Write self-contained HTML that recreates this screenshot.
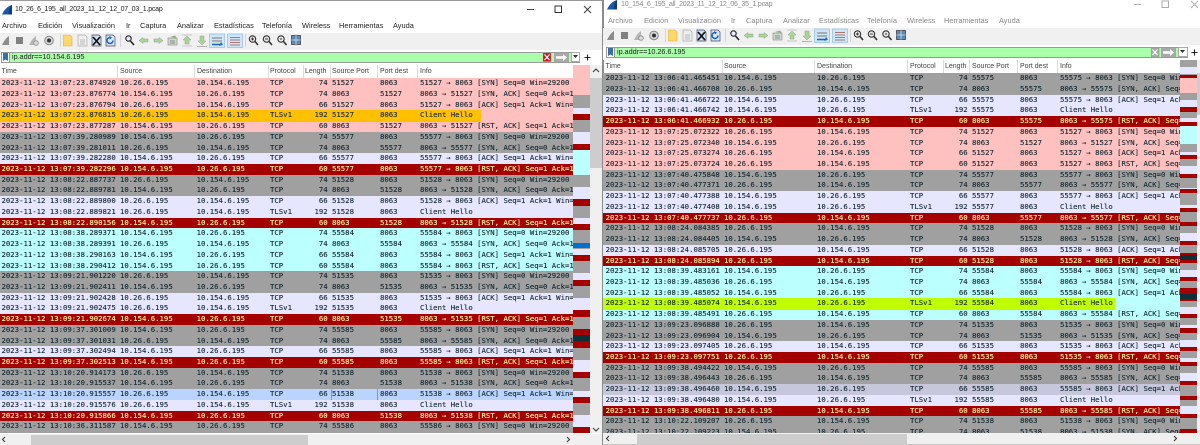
<!DOCTYPE html>
<html lang="es"><head><meta charset="utf-8"><title>Wireshark</title>
<style>
html,body{margin:0;padding:0;background:#fff;overflow:hidden}
#a{position:relative;width:1200px;height:445px;overflow:hidden;background:#fff;filter:blur(.3px);font-family:"Liberation Sans",sans-serif}
.x{position:absolute}
.tt{position:absolute;font-size:7px;letter-spacing:-.2px;color:#222;white-space:pre;line-height:10px}
.m{position:absolute;font-size:7.4px;color:#222;white-space:pre;line-height:10px}
.dim .m,.dim .tt{color:#8a8a8a}
.h{position:absolute;font-size:7px;color:#444;white-space:pre;line-height:10px}
.tb{position:absolute;overflow:hidden;font-family:"DejaVu Sans Mono","Liberation Mono",monospace;font-size:7.3px;color:#12272e;-webkit-text-stroke:.12px currentColor}
.tb p{display:block;margin:0;height:10.72px;position:relative;overflow:hidden}
.tb span{position:absolute;top:0;line-height:10.5px;white-space:pre}
.g{background:#a0a0a0}.l{background:#e7e6ff}.k{background:#ffc0c0}.c{background:#bbffff}
.r{background:#a40000;color:#fffc9c}.sel{background:#bad4ff}.dl{background:#c6c6dc}
.tb u{position:absolute;top:-.5px;height:11.7px;left:0;text-decoration:none}
.L{left:0;top:78.3px;width:573px;height:355px}
.L span:nth-of-type(1){left:1.5px}.L span:nth-of-type(2){left:120px}.L span:nth-of-type(3){left:196.6px}.L span:nth-of-type(4){left:270px}
.L span:nth-of-type(5){right:245.3px}.L span:nth-of-type(6){left:332px}.L span:nth-of-type(7){left:380px}.L span:nth-of-type(8){left:420px}
.R{left:603px;top:73.3px;width:577px;height:360px}
.R span:nth-of-type(1){left:2.6px}.R span:nth-of-type(2){left:121px}.R span:nth-of-type(3){left:214px}.R span:nth-of-type(4){left:307px}
.R span:nth-of-type(5){right:212.3px}.R span:nth-of-type(6){left:369px}.R span:nth-of-type(7){left:417px}.R span:nth-of-type(8){left:457px}
.f{outline:1px solid #7f9ab0;outline-offset:0;width:45px;height:10.5px;top:0}
.ov{position:absolute;width:17px}
.ov div{position:absolute;left:0;width:17px}
.dv{position:absolute;width:1px;background:#dcdcdc}
</style></head><body>
<div id="a">
<svg width="0" height="0" style="position:absolute"><defs>
<g id="fin"><path d="M0 9.5H10V0C6 1 2.5 4 0 9.5Z" fill="#1c56a8"/><path d="M6.5 9.5H10V0C8 1.500 7 5 6.500 9.500Z" fill="#0d3a80"/></g>
<g id="tools">
<path d="M2 45H9V36C6 38 4 41 2 45Z" fill="#8c8c8c"/>
<rect x="16" y="37" width="7" height="7" fill="#808080"/>
<path d="M29 45H36V36C33 38 31 41 29 45Z" fill="#b5b5b5"/><circle cx="36" cy="43" r="2.300" fill="#ddd" stroke="#999"/>
<circle cx="49" cy="40.500" r="4.300" fill="#d9d9d9" stroke="#888"/><circle cx="49" cy="40.500" r="2" fill="#333"/>
<rect x="60" y="34" width="1" height="13" fill="#d5d5d5"/>
<path d="M63.500 35H70L72 37V46H63.500Z" fill="#fdd868" stroke="#e0b040" stroke-width=".6"/>
<path d="M78 35H85L87 37V46H78Z" fill="#eee" stroke="#aaa" stroke-width=".7"/><path d="M80 40H85M80 42H85M80 44H85" stroke="#aaa" stroke-width=".8"/>
<path d="M92 35H99L101 37V46H92Z" fill="#cfe0f5" stroke="#446" stroke-width=".7"/><path d="M93 37L100 45M100 37L93 45" stroke="#111" stroke-width="1.700"/>
<path d="M106 35H113L115 37V46H106Z" fill="#d8e8f8" stroke="#446" stroke-width=".7"/><path d="M113 40.500A3 3 0 1 1 110.500 37.500" fill="none" stroke="#1a62c0" stroke-width="1.500"/><path d="M109 36L112 37.500L110 39.500Z" fill="#1a62c0"/>
<rect x="120" y="34" width="1" height="13" fill="#d5d5d5"/>
<circle cx="128.500" cy="38.500" r="2.700" fill="#eef" stroke="#222" stroke-width="1.100"/><path d="M130.500 41L134 45" stroke="#222" stroke-width="1.600"/>
<path d="M139 40.500L143 37.500V39H148V42H143V43.500Z" fill="#a8d890" stroke="#999" stroke-width=".5"/>
<path d="M163 40.500L159 37.500V39H154V42H159V43.500Z" fill="#a8d890" stroke="#999" stroke-width=".5"/>
<rect x="168" y="38" width="9" height="7" fill="#cfd8c8" stroke="#888" stroke-width=".6"/><path d="M170 37L175 35.500L177 38" fill="#8fb080"/><path d="M170 41H175M170 43H175" stroke="#678" stroke-width=".7"/>
<path d="M187 36L191 40H189V44H185V40H183Z" fill="#a8d890" stroke="#999" stroke-width=".5"/><path d="M182 35H192M182 46H192" stroke="#bbb" stroke-width=".8"/>
<path d="M202 45L206 41H204V36H200V41H198Z" fill="#a8d890" stroke="#999" stroke-width=".5"/><path d="M197 46.500H207" stroke="#aaa" stroke-width=".9"/>
<rect x="209.500" y="34" width="15" height="13.500" fill="#cfe5f6" stroke="#8fc0e4" stroke-width=".7"/><path d="M212 38H222M212 41H222" stroke="#777" stroke-width="1"/><path d="M212 44.500H222" stroke="#1f6ab0" stroke-width="1.600"/><path d="M221 42L223 44.500L219 46Z" fill="#1f6ab0"/>
<rect x="227.500" y="34" width="15" height="13.500" fill="#cfe5f6" stroke="#8fc0e4" stroke-width=".7"/><path d="M230 37.500H240M230 40H240M230 42.500H240M230 45H240" stroke="#a77" stroke-width="1"/>
<rect x="245" y="34" width="1" height="13" fill="#d5d5d5"/>
<circle cx="252.500" cy="39" r="3.200" fill="#e8e8e8" stroke="#333" stroke-width="1.100"/><path d="M255 41.500L258 45" stroke="#333" stroke-width="1.600"/><path d="M251 39H254M252.500 37.500V40.500" stroke="#333" stroke-width=".9"/>
<circle cx="266.500" cy="39" r="3.200" fill="#e8e8e8" stroke="#333" stroke-width="1.100"/><path d="M269 41.500L272 45" stroke="#333" stroke-width="1.600"/><path d="M265 39H268" stroke="#333" stroke-width=".9"/>
<circle cx="281" cy="39" r="3.200" fill="#e8e8e8" stroke="#333" stroke-width="1.100"/><path d="M283.500 41.500L286.500 45" stroke="#333" stroke-width="1.600"/><rect x="280.300" y="38.300" width="1.400" height="1.400" fill="#333"/>
<rect x="291.500" y="35.500" width="9" height="9" fill="#5a8ab8" stroke="#333" stroke-width=".7"/><path d="M296 35.500V44.500M291.500 40H300.500" stroke="#ddd" stroke-width=".8"/>
</g>
<g id="xb"><rect width="8" height="8.500" fill="currentColor" stroke="#888" stroke-width=".5"/><path d="M1.500 1.500L6.500 7M6.500 1.500L1.500 7" stroke="#fff" stroke-width="1.300"/></g>
</defs></svg>

<!-- LEFT WINDOW -->
<div class="x" style="left:0;top:0;width:602px;height:1px;background:#9a9a9a"></div>
<svg class="x" style="left:2px;top:4.500px" width="10" height="10"><use href="#fin"/></svg>
<div class="tt" style="left:15px;top:5px">10_26_6_195_all_2023_11_12_12_07_03_1.pcap</div>
<svg class="x" style="left:520px;top:3px" width="80" height="13"><path d="M7 6.500H14" stroke="#333" stroke-width=".9"/><rect x="35" y="3" width="6.500" height="6.500" fill="none" stroke="#333"/><path d="M64 3L71 10M71 3L64 10" stroke="#333" stroke-width=".9"/></svg>
<div class="m" style="left:2px;top:21px">Archivo</div><div class="m" style="left:38px;top:21px">Edición</div><div class="m" style="left:72px;top:21px">Visualización</div><div class="m" style="left:126px;top:21px">Ir</div><div class="m" style="left:140px;top:21px">Captura</div><div class="m" style="left:177px;top:21px">Analizar</div><div class="m" style="left:214px;top:21px">Estadísticas</div><div class="m" style="left:262px;top:21px">Telefonía</div><div class="m" style="left:302px;top:21px">Wireless</div><div class="m" style="left:339px;top:21px">Herramientas</div><div class="m" style="left:393px;top:21px">Ayuda</div>
<div class="x" style="left:0;top:33px;width:602px;height:17px;background:#f0f0f0"></div>
<svg class="x" style="left:0;top:0" width="310" height="50"><use href="#tools"/></svg>
<div class="x" style="left:0;top:50px;width:602px;height:15px;background:#fff"></div>
<div class="x" style="left:1px;top:51.500px;width:579px;height:11px;background:#aaffaa;border:1px solid #9a9a9a;box-sizing:border-box"></div>
<div class="x" style="left:1px;top:51.500px;width:9px;height:11px;background:#fff;border:1px solid #9a9a9a;box-sizing:border-box"></div>
<svg class="x" style="left:3px;top:53px" width="5" height="9"><path d="M0 0H5V8L2.500 6.500L0 8Z" fill="#3a6db0"/></svg>
<div class="x" style="left:12px;top:52px;font-size:7.300px;line-height:10px;color:#222;white-space:pre;letter-spacing:-.05px">ip.addr==10.154.6.195</div>
<svg class="x" style="left:543px;top:53px;color:#d01020" width="9" height="9"><use href="#xb"/></svg>
<div class="x" style="left:554px;top:53px;width:15px;height:8.500px;background:#a8a8a8"></div>
<svg class="x" style="left:556px;top:54px" width="12" height="7"><path d="M0 2.300H7V0L11 3.500L7 7V4.700H0Z" fill="#fff"/></svg>
<div class="x" style="left:571px;top:52px;width:9px;height:10px;background:#fff;border:1px solid #aaa;box-sizing:border-box"></div>
<svg class="x" style="left:573px;top:55px" width="6" height="4"><path d="M0 0H5L2.500 3Z" fill="#333"/></svg>
<svg class="x" style="left:584px;top:54px" width="7" height="7"><path d="M3.500 .5V6.500M.5 3.500H6.500" stroke="#222" stroke-width="1.100"/></svg>
<div class="h" style="left:1.500px;top:67px">Time</div><div class="h" style="left:120px;top:67px">Source</div><div class="h" style="left:197px;top:67px">Destination</div><div class="h" style="left:270px;top:67px">Protocol</div><div class="h" style="left:305px;top:67px">Length</div><div class="h" style="left:332px;top:67px">Source Port</div><div class="h" style="left:380px;top:67px">Port dest</div><div class="h" style="left:420px;top:67px">Info</div>
<div class="dv" style="left:117px;top:65px;height:13px"></div><div class="dv" style="left:194px;top:65px;height:13px"></div><div class="dv" style="left:268px;top:65px;height:13px"></div><div class="dv" style="left:303px;top:65px;height:13px"></div><div class="dv" style="left:330px;top:65px;height:13px"></div><div class="dv" style="left:377px;top:65px;height:13px"></div><div class="dv" style="left:417px;top:65px;height:13px"></div>

<div class="tb L">
<p class="k"><span>2023-11-12 13:07:23.874920</span><span>10.26.6.195</span><span>10.154.6.195</span><span>TCP</span><span>74</span><span>51527</span><span>8063</span><span>51527 → 8063 [SYN] Seq=0 Win=29200 Len=0 MSS=1460</span></p>
<p class="k"><span>2023-11-12 13:07:23.876774</span><span>10.154.6.195</span><span>10.26.6.195</span><span>TCP</span><span>74</span><span>8063</span><span>51527</span><span>8063 → 51527 [SYN, ACK] Seq=0 Ack=1 Win=29200</span></p>
<p class="k"><span>2023-11-12 13:07:23.876794</span><span>10.26.6.195</span><span>10.154.6.195</span><span>TCP</span><span>66</span><span>51527</span><span>8063</span><span>51527 → 8063 [ACK] Seq=1 Ack=1 Win=29696</span></p>
<p class="k" style="overflow:visible;z-index:1"><u style="width:481px;background:#ffc000"></u><span>2023-11-12 13:07:23.876815</span><span>10.26.6.195</span><span>10.154.6.195</span><span>TLSv1</span><span>192</span><span>51527</span><span>8063</span><span>Client Hello</span></p>
<p class="k"><span>2023-11-12 13:07:23.877287</span><span>10.154.6.195</span><span>10.26.6.195</span><span>TCP</span><span>60</span><span>8063</span><span>51527</span><span>8063 → 51527 [RST, ACK] Seq=1 Ack=127 Win=0</span></p>
<p class="g"><span>2023-11-12 13:07:39.280989</span><span>10.154.6.195</span><span>10.26.6.195</span><span>TCP</span><span>74</span><span>55577</span><span>8063</span><span>55577 → 8063 [SYN] Seq=0 Win=29200 Len=0 MSS=1460</span></p>
<p class="g"><span>2023-11-12 13:07:39.281011</span><span>10.26.6.195</span><span>10.154.6.195</span><span>TCP</span><span>74</span><span>8063</span><span>55577</span><span>8063 → 55577 [SYN, ACK] Seq=0 Ack=1 Win=29200</span></p>
<p class="l"><span>2023-11-12 13:07:39.282280</span><span>10.154.6.195</span><span>10.26.6.195</span><span>TCP</span><span>66</span><span>55577</span><span>8063</span><span>55577 → 8063 [ACK] Seq=1 Ack=1 Win=29696</span></p>
<p class="r"><span>2023-11-12 13:07:39.282296</span><span>10.154.6.195</span><span>10.26.6.195</span><span>TCP</span><span>60</span><span>55577</span><span>8063</span><span>55577 → 8063 [RST, ACK] Seq=1 Ack=1 Win=0</span></p>
<p class="g"><span>2023-11-12 13:08:22.887737</span><span>10.26.6.195</span><span>10.154.6.195</span><span>TCP</span><span>74</span><span>51528</span><span>8063</span><span>51528 → 8063 [SYN] Seq=0 Win=29200 Len=0 MSS=1460</span></p>
<p class="g"><span>2023-11-12 13:08:22.889781</span><span>10.154.6.195</span><span>10.26.6.195</span><span>TCP</span><span>74</span><span>8063</span><span>51528</span><span>8063 → 51528 [SYN, ACK] Seq=0 Ack=1 Win=29200</span></p>
<p class="l"><span>2023-11-12 13:08:22.889800</span><span>10.26.6.195</span><span>10.154.6.195</span><span>TCP</span><span>66</span><span>51528</span><span>8063</span><span>51528 → 8063 [ACK] Seq=1 Ack=1 Win=29696</span></p>
<p class="l"><span>2023-11-12 13:08:22.889821</span><span>10.26.6.195</span><span>10.154.6.195</span><span>TLSv1</span><span>192</span><span>51528</span><span>8063</span><span>Client Hello</span></p>
<p class="r"><span>2023-11-12 13:08:22.890156</span><span>10.154.6.195</span><span>10.26.6.195</span><span>TCP</span><span>60</span><span>8063</span><span>51528</span><span>8063 → 51528 [RST, ACK] Seq=1 Ack=127 Win=0</span></p>
<p class="c"><span>2023-11-12 13:08:38.289371</span><span>10.154.6.195</span><span>10.26.6.195</span><span>TCP</span><span>74</span><span>55584</span><span>8063</span><span>55584 → 8063 [SYN] Seq=0 Win=29200 Len=0 MSS=1460</span></p>
<p class="c"><span>2023-11-12 13:08:38.289391</span><span>10.26.6.195</span><span>10.154.6.195</span><span>TCP</span><span>74</span><span>8063</span><span>55584</span><span>8063 → 55584 [SYN, ACK] Seq=0 Ack=1 Win=29200</span></p>
<p class="c"><span>2023-11-12 13:08:38.290163</span><span>10.154.6.195</span><span>10.26.6.195</span><span>TCP</span><span>66</span><span>55584</span><span>8063</span><span>55584 → 8063 [ACK] Seq=1 Ack=1 Win=29696</span></p>
<p class="c"><span>2023-11-12 13:08:38.290412</span><span>10.154.6.195</span><span>10.26.6.195</span><span>TCP</span><span>60</span><span>55584</span><span>8063</span><span>55584 → 8063 [RST, ACK] Seq=1 Ack=1 Win=0</span></p>
<p class="g"><span>2023-11-12 13:09:21.901220</span><span>10.26.6.195</span><span>10.154.6.195</span><span>TCP</span><span>74</span><span>51535</span><span>8063</span><span>51535 → 8063 [SYN] Seq=0 Win=29200 Len=0 MSS=1460</span></p>
<p class="g"><span>2023-11-12 13:09:21.902411</span><span>10.154.6.195</span><span>10.26.6.195</span><span>TCP</span><span>74</span><span>8063</span><span>51535</span><span>8063 → 51535 [SYN, ACK] Seq=0 Ack=1 Win=29200</span></p>
<p class="l"><span>2023-11-12 13:09:21.902428</span><span>10.26.6.195</span><span>10.154.6.195</span><span>TCP</span><span>66</span><span>51535</span><span>8063</span><span>51535 → 8063 [ACK] Seq=1 Ack=1 Win=29696</span></p>
<p class="l"><span>2023-11-12 13:09:21.902475</span><span>10.26.6.195</span><span>10.154.6.195</span><span>TLSv1</span><span>192</span><span>51535</span><span>8063</span><span>Client Hello</span></p>
<p class="r"><span>2023-11-12 13:09:21.902674</span><span>10.154.6.195</span><span>10.26.6.195</span><span>TCP</span><span>60</span><span>8063</span><span>51535</span><span>8063 → 51535 [RST, ACK] Seq=1 Ack=127 Win=0</span></p>
<p class="g"><span>2023-11-12 13:09:37.301009</span><span>10.154.6.195</span><span>10.26.6.195</span><span>TCP</span><span>74</span><span>55585</span><span>8063</span><span>55585 → 8063 [SYN] Seq=0 Win=29200 Len=0 MSS=1460</span></p>
<p class="g"><span>2023-11-12 13:09:37.301031</span><span>10.26.6.195</span><span>10.154.6.195</span><span>TCP</span><span>74</span><span>8063</span><span>55585</span><span>8063 → 55585 [SYN, ACK] Seq=0 Ack=1 Win=29200</span></p>
<p class="l"><span>2023-11-12 13:09:37.302494</span><span>10.154.6.195</span><span>10.26.6.195</span><span>TCP</span><span>66</span><span>55585</span><span>8063</span><span>55585 → 8063 [ACK] Seq=1 Ack=1 Win=29696</span></p>
<p class="r"><span>2023-11-12 13:09:37.302513</span><span>10.154.6.195</span><span>10.26.6.195</span><span>TCP</span><span>60</span><span>55585</span><span>8063</span><span>55585 → 8063 [RST, ACK] Seq=1 Ack=1 Win=0</span></p>
<p class="g"><span>2023-11-12 13:10:20.914173</span><span>10.26.6.195</span><span>10.154.6.195</span><span>TCP</span><span>74</span><span>51538</span><span>8063</span><span>51538 → 8063 [SYN] Seq=0 Win=29200 Len=0 MSS=1460</span></p>
<p class="g"><span>2023-11-12 13:10:20.915537</span><span>10.154.6.195</span><span>10.26.6.195</span><span>TCP</span><span>74</span><span>8063</span><span>51538</span><span>8063 → 51538 [SYN, ACK] Seq=0 Ack=1 Win=29200</span></p>
<p class="sel"><span>2023-11-12 13:10:20.915557</span><span>10.26.6.195</span><span>10.154.6.195</span><span>TCP</span><span>66</span><span class="f">51538</span><span>8063</span><span>51538 → 8063 [ACK] Seq=1 Ack=1 Win=29696</span></p>
<p class="l"><span>2023-11-12 13:10:20.915576</span><span>10.26.6.195</span><span>10.154.6.195</span><span>TLSv1</span><span>192</span><span>51538</span><span>8063</span><span>Client Hello</span></p>
<p class="r"><span>2023-11-12 13:10:20.915866</span><span>10.154.6.195</span><span>10.26.6.195</span><span>TCP</span><span>60</span><span>8063</span><span>51538</span><span>8063 → 51538 [RST, ACK] Seq=1 Ack=127 Win=0</span></p>
<p class="g"><span>2023-11-12 13:10:36.311587</span><span>10.154.6.195</span><span>10.26.6.195</span><span>TCP</span><span>74</span><span>55586</span><span>8063</span><span>55586 → 8063 [SYN] Seq=0 Win=29200 Len=0 MSS=1460</span></p>
<p class="g"></p>
</div>
<div class="ov" style="left:573px;top:65px;height:368px;background:#a0a0a0">
<div style="top:0;height:30px;background:#ffc0c0"></div><div style="top:30px;height:13px;background:#a0a0a0"></div>
<div style="top:43px;height:6px;background:#e7e6ff"></div><div style="top:49px;height:6px;background:#a40000"></div>
<div style="top:67px;height:12px;background:#e7e6ff"></div><div style="top:79px;height:6px;background:#a40000"></div>
<div style="top:85px;height:25px;background:#bbffff"></div>
<div style="top:122px;height:12px;background:#e7e6ff"></div><div style="top:134px;height:7px;background:#a40000"></div>
<div style="top:153px;height:6px;background:#e7e6ff"></div><div style="top:159px;height:6px;background:#a40000"></div>
<div style="top:178px;height:5px;background:#0070d0"></div>
<div style="top:184px;height:6px;background:#e7e6ff"></div><div style="top:190px;height:6px;background:#a40000"></div>
<div style="top:208px;height:7px;background:#e7e6ff"></div><div style="top:215px;height:6px;background:#a40000"></div>
<div style="top:233px;height:12px;background:#e7e6ff"></div><div style="top:245px;height:7px;background:#a40000"></div>
<div style="top:264px;height:6px;background:#a40000"></div><div style="top:270px;height:6px;background:#0f3038"></div><div style="top:276px;height:7px;background:#a40000"></div>
<div style="top:295px;height:12px;background:#e7e6ff"></div><div style="top:307px;height:6px;background:#a40000"></div>
<div style="top:326px;height:6px;background:#e7e6ff"></div><div style="top:332px;height:6px;background:#a40000"></div>
<div style="top:350px;height:12px;background:#e7e6ff"></div><div style="top:362px;height:6px;background:#a40000"></div>
</div>
<div class="x" style="left:590px;top:65px;width:12px;height:368px;background:#f0f0f0"></div>
<div class="x" style="left:590px;top:78px;width:12px;height:90px;background:#cdcdcd"></div>
<svg class="x" style="left:592px;top:68px" width="8" height="5"><path d="M1 4L4 1L7 4" fill="none" stroke="#333" stroke-width="1"/></svg>
<svg class="x" style="left:592px;top:427px" width="8" height="5"><path d="M1 1L4 4L7 1" fill="none" stroke="#333" stroke-width="1"/></svg>
<div class="x" style="left:0;top:433.500px;width:602px;height:11.500px;background:#f0f0f0"></div>
<div class="x" style="left:31px;top:434.500px;width:277px;height:10px;background:#cdcdcd"></div>
<svg class="x" style="left:1px;top:436px" width="6" height="7"><path d="M4 1L1.500 3.500L4 6" fill="none" stroke="#333"/></svg>
<svg class="x" style="left:565px;top:436px" width="6" height="7"><path d="M2 1L4.500 3.500L2 6" fill="none" stroke="#333"/></svg>

<!-- DIVIDER -->
<div class="x" style="left:601.500px;top:0;width:2px;height:445px;background:#8c8c8c"></div>

<!-- RIGHT WINDOW -->
<div class="dim">
<svg class="x" style="left:607px;top:0" width="10" height="10"><use href="#fin"/></svg>
<div class="tt" style="left:621px;top:0">10_154_6_195_all_2023_11_12_12_06_35_1.pcap</div>
<svg class="x" style="left:1127px;top:-2px" width="73" height="13"><path d="M7 6.500H14" stroke="#aaa" stroke-width=".9"/><rect x="35" y="3" width="6.500" height="6.500" fill="none" stroke="#aaa"/><path d="M64 3L71 10M71 3L64 10" stroke="#aaa" stroke-width=".9"/></svg>
<div class="m" style="left:608px;top:16px">Archivo</div><div class="m" style="left:644px;top:16px">Edición</div><div class="m" style="left:678px;top:16px">Visualización</div><div class="m" style="left:731px;top:16px">Ir</div><div class="m" style="left:746px;top:16px">Captura</div><div class="m" style="left:783px;top:16px">Analizar</div><div class="m" style="left:819px;top:16px">Estadísticas</div><div class="m" style="left:867px;top:16px">Telefonía</div><div class="m" style="left:907px;top:16px">Wireless</div><div class="m" style="left:944px;top:16px">Herramientas</div><div class="m" style="left:999px;top:16px">Ayuda</div>
</div>
<div class="x" style="left:603px;top:28px;width:597px;height:17px;background:#f0f0f0"></div>
<svg class="x" style="left:605px;top:-5px" width="310" height="52"><use href="#tools"/></svg>
<div class="x" style="left:603px;top:45px;width:597px;height:15px;background:#fff"></div>
<div class="x" style="left:606px;top:46.500px;width:582px;height:11px;background:#aaffaa;border:1px solid #9a9a9a;box-sizing:border-box"></div>
<div class="x" style="left:606px;top:46.500px;width:9px;height:11px;background:#fff;border:1px solid #9a9a9a;box-sizing:border-box"></div>
<svg class="x" style="left:608px;top:48px" width="5" height="9"><path d="M0 0H5V8L2.500 6.500L0 8Z" fill="#3a6db0"/></svg>
<div class="x" style="left:617px;top:47px;font-size:7.300px;line-height:10px;color:#222;white-space:pre;letter-spacing:-.05px">ip.addr==10.26.6.195</div>
<svg class="x" style="left:1151px;top:48px;color:#a8a8a8" width="9" height="9"><use href="#xb"/></svg>
<div class="x" style="left:1161px;top:48px;width:15px;height:8.500px;background:#a8a8a8"></div>
<svg class="x" style="left:1163px;top:49px" width="12" height="7"><path d="M0 2.300H7V0L11 3.500L7 7V4.700H0Z" fill="#fff"/></svg>
<div class="x" style="left:1178px;top:47px;width:10px;height:10px;background:#fff;border:1px solid #aaa;box-sizing:border-box"></div>
<svg class="x" style="left:1180px;top:50px" width="6" height="4"><path d="M0 0H5L2.500 3Z" fill="#333"/></svg>
<svg class="x" style="left:1191px;top:49px" width="7" height="7"><path d="M3.500 .5V6.500M.5 3.500H6.500" stroke="#222" stroke-width="1.100"/></svg>
<div class="h" style="left:605.500px;top:62px">Time</div><div class="h" style="left:724px;top:62px">Source</div><div class="h" style="left:817px;top:62px">Destination</div><div class="h" style="left:910px;top:62px">Protocol</div><div class="h" style="left:945px;top:62px">Length</div><div class="h" style="left:972px;top:62px">Source Port</div><div class="h" style="left:1020px;top:62px">Port dest</div><div class="h" style="left:1060px;top:62px">Info</div>
<div class="dv" style="left:722px;top:60px;height:13px"></div><div class="dv" style="left:814px;top:60px;height:13px"></div><div class="dv" style="left:907px;top:60px;height:13px"></div><div class="dv" style="left:943px;top:60px;height:13px"></div><div class="dv" style="left:969px;top:60px;height:13px"></div><div class="dv" style="left:1017px;top:60px;height:13px"></div><div class="dv" style="left:1057px;top:60px;height:13px"></div>

<div class="tb R">
<p class="g"><span>2023-11-12 13:06:41.465451</span><span>10.154.6.195</span><span>10.26.6.195</span><span>TCP</span><span>74</span><span>55575</span><span>8063</span><span>55575 → 8063 [SYN] Seq=0 Win=29200 Len=0</span></p>
<p class="g"><span>2023-11-12 13:06:41.466708</span><span>10.26.6.195</span><span>10.154.6.195</span><span>TCP</span><span>74</span><span>8063</span><span>55575</span><span>8063 → 55575 [SYN, ACK] Seq=0 Ack=1</span></p>
<p class="l"><span>2023-11-12 13:06:41.466722</span><span>10.154.6.195</span><span>10.26.6.195</span><span>TCP</span><span>66</span><span>55575</span><span>8063</span><span>55575 → 8063 [ACK] Seq=1 Ack=1 Win=29696</span></p>
<p class="l"><span>2023-11-12 13:06:41.466742</span><span>10.154.6.195</span><span>10.26.6.195</span><span>TLSv1</span><span>192</span><span>55575</span><span>8063</span><span>Client Hello</span></p>
<p class="r"><span>2023-11-12 13:06:41.466932</span><span>10.26.6.195</span><span>10.154.6.195</span><span>TCP</span><span>60</span><span>8063</span><span>55575</span><span>8063 → 55575 [RST, ACK] Seq=1 Ack=127</span></p>
<p class="k"><span>2023-11-12 13:07:25.072322</span><span>10.26.6.195</span><span>10.154.6.195</span><span>TCP</span><span>74</span><span>51527</span><span>8063</span><span>51527 → 8063 [SYN] Seq=0 Win=29200 Len=0</span></p>
<p class="k"><span>2023-11-12 13:07:25.072340</span><span>10.154.6.195</span><span>10.26.6.195</span><span>TCP</span><span>74</span><span>8063</span><span>51527</span><span>8063 → 51527 [SYN, ACK] Seq=0 Ack=1</span></p>
<p class="k"><span>2023-11-12 13:07:25.073274</span><span>10.26.6.195</span><span>10.154.6.195</span><span>TCP</span><span>66</span><span>51527</span><span>8063</span><span>51527 → 8063 [ACK] Seq=1 Ack=1 Win=29696</span></p>
<p class="k"><span>2023-11-12 13:07:25.073724</span><span>10.26.6.195</span><span>10.154.6.195</span><span>TCP</span><span>60</span><span>51527</span><span>8063</span><span>51527 → 8063 [RST, ACK] Seq=1 Ack=1</span></p>
<p class="g"><span>2023-11-12 13:07:40.475848</span><span>10.154.6.195</span><span>10.26.6.195</span><span>TCP</span><span>74</span><span>55577</span><span>8063</span><span>55577 → 8063 [SYN] Seq=0 Win=29200 Len=0</span></p>
<p class="g"><span>2023-11-12 13:07:40.477371</span><span>10.26.6.195</span><span>10.154.6.195</span><span>TCP</span><span>74</span><span>8063</span><span>55577</span><span>8063 → 55577 [SYN, ACK] Seq=0 Ack=1</span></p>
<p class="l"><span>2023-11-12 13:07:40.477388</span><span>10.154.6.195</span><span>10.26.6.195</span><span>TCP</span><span>66</span><span>55577</span><span>8063</span><span>55577 → 8063 [ACK] Seq=1 Ack=1 Win=29696</span></p>
<p class="l"><span>2023-11-12 13:07:40.477408</span><span>10.154.6.195</span><span>10.26.6.195</span><span>TLSv1</span><span>192</span><span>55577</span><span>8063</span><span>Client Hello</span></p>
<p class="r"><span>2023-11-12 13:07:40.477737</span><span>10.26.6.195</span><span>10.154.6.195</span><span>TCP</span><span>60</span><span>8063</span><span>55577</span><span>8063 → 55577 [RST, ACK] Seq=1 Ack=127</span></p>
<p class="g"><span>2023-11-12 13:08:24.084385</span><span>10.26.6.195</span><span>10.154.6.195</span><span>TCP</span><span>74</span><span>51528</span><span>8063</span><span>51528 → 8063 [SYN] Seq=0 Win=29200 Len=0</span></p>
<p class="g"><span>2023-11-12 13:08:24.084405</span><span>10.154.6.195</span><span>10.26.6.195</span><span>TCP</span><span>74</span><span>8063</span><span>51528</span><span>8063 → 51528 [SYN, ACK] Seq=0 Ack=1</span></p>
<p class="l"><span>2023-11-12 13:08:24.085705</span><span>10.26.6.195</span><span>10.154.6.195</span><span>TCP</span><span>66</span><span>51528</span><span>8063</span><span>51528 → 8063 [ACK] Seq=1 Ack=1 Win=29696</span></p>
<p class="r"><span>2023-11-12 13:08:24.085894</span><span>10.26.6.195</span><span>10.154.6.195</span><span>TCP</span><span>60</span><span>51528</span><span>8063</span><span>51528 → 8063 [RST, ACK] Seq=1 Ack=1</span></p>
<p class="c"><span>2023-11-12 13:08:39.483161</span><span>10.154.6.195</span><span>10.26.6.195</span><span>TCP</span><span>74</span><span>55584</span><span>8063</span><span>55584 → 8063 [SYN] Seq=0 Win=29200 Len=0</span></p>
<p class="c"><span>2023-11-12 13:08:39.485036</span><span>10.26.6.195</span><span>10.154.6.195</span><span>TCP</span><span>74</span><span>8063</span><span>55584</span><span>8063 → 55584 [SYN, ACK] Seq=0 Ack=1</span></p>
<p class="c"><span>2023-11-12 13:08:39.485052</span><span>10.154.6.195</span><span>10.26.6.195</span><span>TCP</span><span>66</span><span>55584</span><span>8063</span><span>55584 → 8063 [ACK] Seq=1 Ack=1 Win=29696</span></p>
<p class="c" style="overflow:visible;z-index:1"><u style="width:512px;background:#c0ff00"></u><span>2023-11-12 13:08:39.485074</span><span>10.154.6.195</span><span>10.26.6.195</span><span>TLSv1</span><span>192</span><span>55584</span><span>8063</span><span>Client Hello</span></p>
<p class="c"><span>2023-11-12 13:08:39.485491</span><span>10.26.6.195</span><span>10.154.6.195</span><span>TCP</span><span>60</span><span>8063</span><span>55584</span><span>8063 → 55584 [RST, ACK] Seq=1 Ack=127</span></p>
<p class="g"><span>2023-11-12 13:09:23.096888</span><span>10.26.6.195</span><span>10.154.6.195</span><span>TCP</span><span>74</span><span>51535</span><span>8063</span><span>51535 → 8063 [SYN] Seq=0 Win=29200 Len=0</span></p>
<p class="g"><span>2023-11-12 13:09:23.096904</span><span>10.154.6.195</span><span>10.26.6.195</span><span>TCP</span><span>74</span><span>8063</span><span>51535</span><span>8063 → 51535 [SYN, ACK] Seq=0 Ack=1</span></p>
<p class="l"><span>2023-11-12 13:09:23.097405</span><span>10.26.6.195</span><span>10.154.6.195</span><span>TCP</span><span>66</span><span>51535</span><span>8063</span><span>51535 → 8063 [ACK] Seq=1 Ack=1 Win=29696</span></p>
<p class="r"><span>2023-11-12 13:09:23.097751</span><span>10.26.6.195</span><span>10.154.6.195</span><span>TCP</span><span>60</span><span>51535</span><span>8063</span><span>51535 → 8063 [RST, ACK] Seq=1 Ack=1</span></p>
<p class="g"><span>2023-11-12 13:09:38.494422</span><span>10.154.6.195</span><span>10.26.6.195</span><span>TCP</span><span>74</span><span>55585</span><span>8063</span><span>55585 → 8063 [SYN] Seq=0 Win=29200 Len=0</span></p>
<p class="g"><span>2023-11-12 13:09:38.496443</span><span>10.26.6.195</span><span>10.154.6.195</span><span>TCP</span><span>74</span><span>8063</span><span>55585</span><span>8063 → 55585 [SYN, ACK] Seq=0 Ack=1</span></p>
<p class="dl"><span>2023-11-12 13:09:38.496460</span><span>10.154.6.195</span><span>10.26.6.195</span><span>TCP</span><span>66</span><span>55585</span><span>8063</span><span>55585 → 8063 [ACK] Seq=1 Ack=1 Win=29696</span></p>
<p class="l"><span>2023-11-12 13:09:38.496480</span><span>10.154.6.195</span><span>10.26.6.195</span><span>TLSv1</span><span>192</span><span>55585</span><span>8063</span><span>Client Hello</span></p>
<p class="r"><span>2023-11-12 13:09:38.496811</span><span>10.26.6.195</span><span>10.154.6.195</span><span>TCP</span><span>60</span><span>8063</span><span>55585</span><span>8063 → 55585 [RST, ACK] Seq=1 Ack=127</span></p>
<p class="g"><span>2023-11-12 13:10:22.109207</span><span>10.26.6.195</span><span>10.154.6.195</span><span>TCP</span><span>74</span><span>51538</span><span>8063</span><span>51538 → 8063 [SYN] Seq=0 Win=29200 Len=0</span></p>
<p class="g"><span>2023-11-12 13:10:22.109223</span><span>10.154.6.195</span><span>10.26.6.195</span><span>TCP</span><span>74</span><span>8063</span><span>51538</span><span>8063 → 51538 [SYN, ACK] Seq=0 Ack=1</span></p>
</div>
<div class="ov" style="left:1180px;top:60px;height:373px;background:#a0a0a0">
<div style="top:7px;height:7px;background:#e7e6ff"></div><div style="top:15px;height:3px;background:#a40000"></div><div style="top:18px;height:15px;background:#ffc0c0"></div>
<div style="top:40px;height:7px;background:#e7e6ff"></div><div style="top:47px;height:5px;background:#a40000"></div>
<div style="top:58px;height:4px;background:#e7e6ff"></div><div style="top:62px;height:4px;background:#a40000"></div><div style="top:66px;height:18px;background:#bbffff"></div>
<div style="top:92px;height:3px;background:#e7e6ff"></div><div style="top:95px;height:4px;background:#a40000"></div>
<div style="top:106px;height:8px;background:#e7e6ff"></div><div style="top:114px;height:4px;background:#a40000"></div>
<div style="top:128px;height:5px;background:#e7e6ff"></div><div style="top:129px;height:4px;background:#a40000"></div>
<div style="top:145px;height:3px;background:#e7e6ff"></div><div style="top:148px;height:4px;background:#a40000"></div>
<div style="top:162px;height:4px;background:#a40000"></div>
<div style="top:173px;height:8px;background:#e7e6ff"></div><div style="top:181px;height:4px;background:#a40000"></div>
<div style="top:193px;height:2px;background:#a40000"></div><div style="top:195px;height:5px;background:#0f3038"></div><div style="top:200px;height:3px;background:#a40000"></div>
<div style="top:210px;height:7px;background:#e7e6ff"></div><div style="top:217px;height:4px;background:#a40000"></div>
<div style="top:228px;height:6px;background:#a40000"></div><div style="top:234px;height:5px;background:#0f3038"></div><div style="top:239px;height:2px;background:#a40000"></div>
<div style="top:247px;height:7px;background:#e7e6ff"></div><div style="top:254px;height:4px;background:#a40000"></div>
<div style="top:265px;height:3px;background:#e7e6ff"></div><div style="top:268px;height:5px;background:#a40000"></div>
<div style="top:280px;height:7px;background:#e7e6ff"></div><div style="top:287px;height:4px;background:#a40000"></div>
<div style="top:298px;height:4px;background:#e7e6ff"></div><div style="top:302px;height:4px;background:#a40000"></div>
<div style="top:313px;height:8px;background:#e7e6ff"></div><div style="top:321px;height:4px;background:#a40000"></div>
<div style="top:336px;height:4px;background:#a40000"></div>
<div style="top:346px;height:8px;background:#e7e6ff"></div><div style="top:354px;height:4px;background:#a40000"></div>
<div style="top:369px;height:4px;background:#a40000"></div>
</div>
<div class="x" style="left:1197px;top:60px;width:3px;height:373px;background:#f0f0f0"></div>
<div class="x" style="left:1197px;top:73px;width:3px;height:42px;background:#cdcdcd"></div>
<div class="x" style="left:603px;top:433px;width:597px;height:12px;background:#f0f0f0"></div>
<div class="x" style="left:637px;top:433.500px;width:270px;height:10px;background:#cdcdcd"></div>
<div class="x" style="left:603px;top:443.500px;width:597px;height:1.500px;background:#c8c8c8"></div>
<svg class="x" style="left:605px;top:435px" width="6" height="7"><path d="M4 1L1.500 3.500L4 6" fill="none" stroke="#333"/></svg>
<svg class="x" style="left:1172px;top:435px" width="6" height="7"><path d="M2 1L4.500 3.500L2 6" fill="none" stroke="#333"/></svg>
</div>
</body></html>
